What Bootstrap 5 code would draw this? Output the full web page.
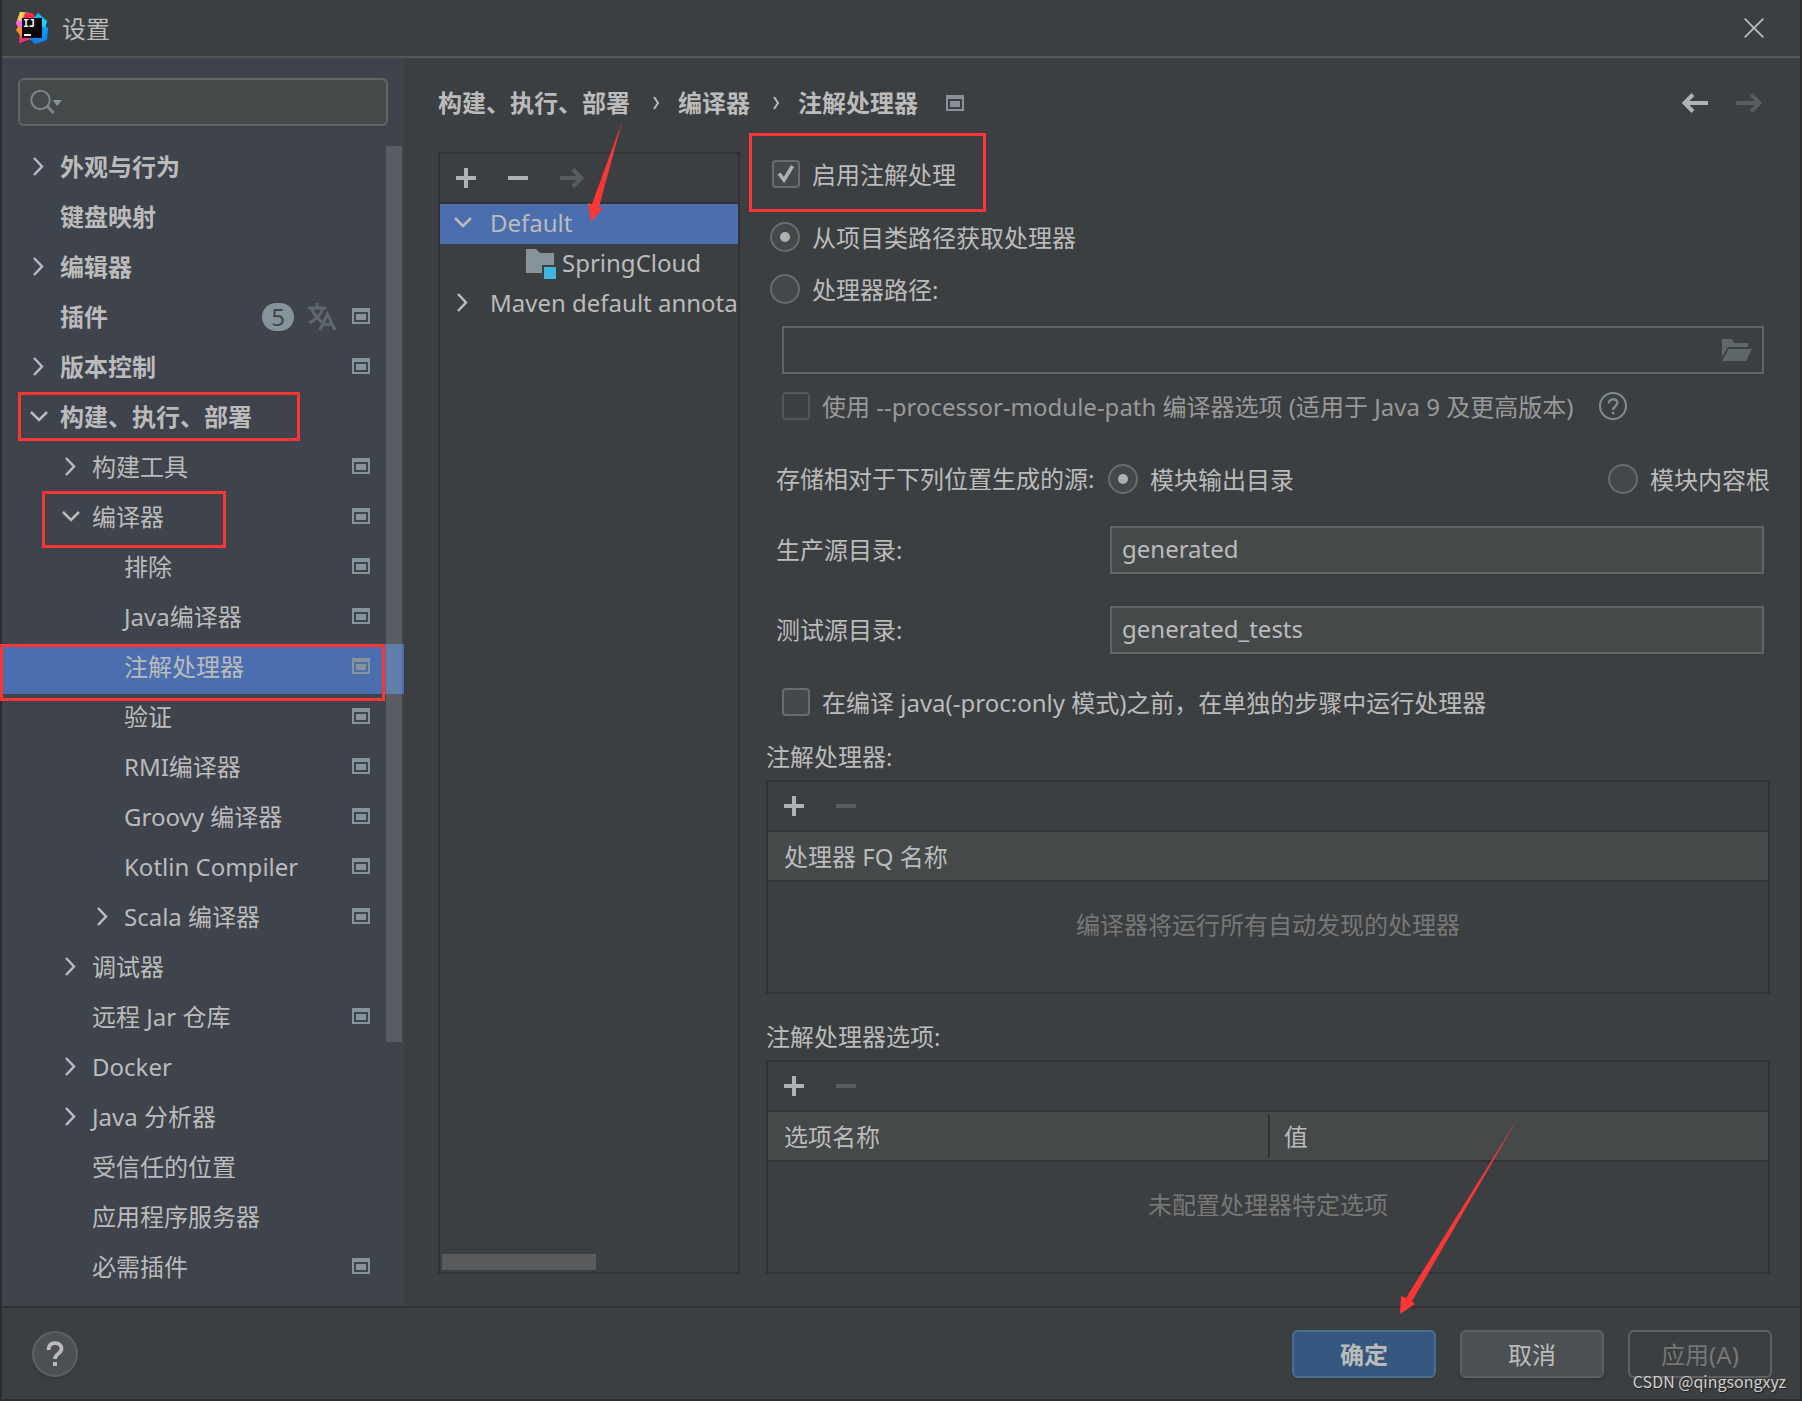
<!DOCTYPE html>
<html lang="zh-CN" data-bs-theme="dark">
<head>
<meta charset="utf-8">
<meta name="viewport" content="width=device-width, initial-scale=1">
<title>设置</title>
<link rel="stylesheet" href="https://cdn.jsdelivr.net/npm/bootstrap@5.3.0/dist/css/bootstrap.min.css">
<style>
:root{--ide-bg:#3c3f41;--ide-text:#bbbbbb;--ide-line:#323232;--ide-field:#45494a;--ide-edge:#646464;--ide-blue:#4b6eaf;--ide-icon:#87939a;--ide-dim:#5b5c5d;--ide-red:#fc3535}
body{background:var(--ide-bg);color:var(--ide-text);font-family:"Noto Sans","Noto Sans CJK SC",sans-serif;font-size:24px;line-height:32px}
svg{display:block;flex:none}
button.tool{background:none;border:0;padding:0;color:#afb1b3}
button.tool:disabled{color:var(--ide-dim)}
.window{min-height:100vh;border:solid #2b2d2f;border-width:0 2px 2px}
.titlebar{height:58px;border-bottom:2px solid #555555;padding:0 36px 0 14px}
.titlebar h1{font-size:24px;line-height:32px;font-weight:400;color:var(--ide-text);margin:0 0 0 14px;padding-top:2px}
.side{width:402px;background:#3f434c;padding-bottom:12px}
.search-wrap{padding:20px 16px 18px}
.search-box{height:48px;border:2px solid var(--ide-edge);border-radius:6px;background:var(--ide-field);padding-left:10px}
.search-box input{background:none;border:0;box-shadow:none;color:var(--ide-text);font-size:24px;padding:0 8px}
.tree a{height:50px;color:var(--ide-text);text-decoration:none;padding:0 34px 4px 0;position:relative}
.tree a.top-level{font-weight:700}
.tree .l0{padding-left:28px}
.tree .l1{padding-left:60px}
.tree .l2{padding-left:92px}
.tree .chev{width:30px}
.tree a.current{background:var(--ide-blue)}
.thumb{position:absolute;right:2px;top:2px;width:16px;height:896px;background:rgba(166,166,166,.26)}
.count{width:32px;height:28px;border-radius:14px;background:var(--ide-icon);color:#3f434c;line-height:28px;font-size:24px;font-weight:400}
.lang{margin:0 16px 0 14px}
.ring{position:absolute;border:3px solid var(--ide-red);pointer-events:none;z-index:3}
.ring-build{left:16px;top:-2px;width:282px;height:49px}
.ring-compiler{left:40px;top:-3px;width:184px;height:57px}
.ring-current{left:-2px;top:0;width:385px;height:57px}
.ring-enable{left:-17px;top:-19px;width:237px;height:79px}
.pointer{position:absolute;pointer-events:none;z-index:4}
.pointer-profile{left:148px;top:-34px}
.pointer-ok{right:282px;top:-190px}
.main{padding:0 30px 32px 34px}
.crumbs{height:94px;padding:0 8px 4px 0;font-weight:700}
.crumbs ol{gap:18px}
.crumbs .here{padding:2px 0 0 10px}
.profiles{width:302px;border:2px solid var(--ide-line)}
.bar{height:50px;border-bottom:2px solid var(--ide-line);padding:0 16px;gap:32px}
.profiles a{height:40px;color:var(--ide-text);text-decoration:none;padding-left:14px;padding-bottom:2px;white-space:nowrap}
.profiles a.current{background:var(--ide-blue)}
.profiles .chev{width:36px}
.profiles .child{padding-left:86px;gap:6px}
.hthumb{width:154px;height:16px;background:#595a5b;margin:0 0 2px 2px}
.opts{margin-left:26px;min-width:0}
.opt{gap:12px}
.opt .form-check-input{width:28px;height:28px;margin:0;flex:none;background-color:#43494a;border:2px solid #6b6b6b;border-radius:4px;box-shadow:none;float:none}
.opt .form-check-input[type=radio]{width:30px;height:30px;border-radius:50%}
.opt .form-check-input:checked{background-color:#43494a;border-color:#6b6b6b}
.opt .form-check-input:disabled{background-color:transparent;border-color:#545556;opacity:1}
.opt .form-check-input[type=checkbox]:checked{background-size:24px 24px;background-image:url("data:image/svg+xml,%3csvg xmlns='http://www.w3.org/2000/svg' viewBox='0 0 24 24'%3e%3cpath d='M5 11.500l5 6.500L18.500 4' fill='none' stroke='%23b0b0b0' stroke-width='3.600'/%3e%3c/svg%3e")}
.opt .form-check-input[type=radio]:checked{background-size:26px 26px;background-image:url("data:image/svg+xml,%3csvg xmlns='http://www.w3.org/2000/svg' viewBox='0 0 26 26'%3e%3ccircle cx='13' cy='13' r='5' fill='%23b0b0b0'/%3e%3c/svg%3e")}
.opt label{padding-top:1px}
.opt.faded,.opt.faded label{color:#999999}
.hint{margin-left:14px}
.row-enable{height:44px;padding-left:6px;position:relative;margin-bottom:15px}
.row-radio{height:52px;padding-left:4px}
.path-box{height:48px;border:2px solid var(--ide-edge);margin:11px 6px 0 16px;padding-right:10px}
.path-box input{background:none!important;border:0;box-shadow:none}
.row-module{height:64px;padding-left:16px}
.row-store{height:50px;margin-top:16px}
.cap{width:344px;padding-left:10px}
.row-store .cap{width:342px}
.row-dir{height:48px;margin-top:22px;padding-right:6px}
.row-dir+.row-dir{margin-top:32px}
.row-dir .form-control{height:48px;border:2px solid var(--ide-edge);border-radius:0;background:var(--ide-field);color:var(--ide-text);font-size:24px;line-height:32px;padding:4px 10px 8px}
.row-proc{height:60px;margin-top:18px;padding-left:16px}
.group-title{font-size:24px;font-weight:400;color:var(--ide-text);line-height:32px;padding:9px 0 7px;margin:0}
.grid-box+.group-title{margin-top:18px}
.grid-box{border:2px solid var(--ide-line)}
.grid-box table{width:100%;table-layout:fixed;border-collapse:separate;border-spacing:0}
.grid-box th{height:50px;background-color:#45494a;border-bottom:2px solid var(--ide-line);font-weight:400;padding:2px 16px 0}
.grid-box th.split{background-image:linear-gradient(var(--ide-line),var(--ide-line));background-size:2px 44px;background-position:left center;background-repeat:no-repeat}
.grid-box td{height:110px;text-align:center;color:#777777;padding:0 0 24px}
.foot{border-top:2px solid var(--ide-line);padding:22px 28px 21px 30px;position:relative}
.foot .btn{width:144px;height:48px;border:2px solid #5e6060;border-radius:6px;background:#4c5052;color:var(--ide-text);font-size:24px;line-height:32px;padding:7px 0 5px;box-shadow:0 3px 2px rgba(0,0,0,.1)}
.foot .btn.ok{background:#365880;border-color:#4c708c;font-weight:700}
.foot .btn:disabled{background:transparent;color:#777777;opacity:1;box-shadow:none}
.foot .btn.help{width:46px;height:46px;border-radius:50%;padding:0}
.credit{position:absolute;right:14px;bottom:6px;font-family:"Noto Sans CJK SC",sans-serif;font-size:16px;line-height:24px;color:#cfcfcf;text-shadow:1px 1px 1px #222222}
</style>
<script src="https://cdn.jsdelivr.net/npm/bootstrap@5.3.0/dist/js/bootstrap.bundle.min.js"></script>
</head>
<body>
<svg width="0" height="0" class="position-absolute" aria-hidden="true">
  <symbol id="right" viewBox="0 0 18 22"><path d="M4 2l8 8.500-8 8.500" fill="none" stroke="currentColor" stroke-width="2.500"/></symbol>
  <symbol id="down" viewBox="0 0 18 22"><path d="M1 6l8 8 8-8" fill="none" stroke="currentColor" stroke-width="2.500"/></symbol>
  <symbol id="proj" viewBox="0 0 18 18"><path d="M0 0h18v16H0zM2 4v10h14V4z" fill="#87939a" fill-rule="evenodd"/><path d="M4 6h10v6H4z" fill="#87939a"/></symbol>
  <symbol id="plus" viewBox="0 0 20 20"><path d="M8 0h4v8h8v4h-8v8H8v-8H0V8h8z" fill="currentColor"/></symbol>
  <symbol id="minus" viewBox="0 0 20 20"><path d="M0 8h20v4H0z" fill="currentColor"/></symbol>
  <symbol id="fwd" viewBox="0 0 26 20"><path d="M0 10h22M15 1.500l8.500 8.500-8.500 8.500" fill="none" stroke="currentColor" stroke-width="4"/></symbol>
  <symbol id="back" viewBox="0 0 26 20"><path d="M26 10H4M11 1.500L2.500 10l8.500 8.500" fill="none" stroke="currentColor" stroke-width="4"/></symbol>
</svg>

<div class="window d-flex flex-column">
  <header class="titlebar d-flex align-items-center">
    <svg width="32" height="32" viewBox="0 0 32 32" aria-hidden="true">
      <defs>
        <linearGradient id="warm" x1="0" y1="0" x2="0" y2="1"><stop offset="0" stop-color="#fcdc5c"/><stop offset=".3" stop-color="#fb7ba8"/><stop offset=".55" stop-color="#fd9a2b"/><stop offset="1" stop-color="#fe2e8c"/></linearGradient>
        <linearGradient id="cool" x1="0" y1="0" x2="0" y2="1"><stop offset="0" stop-color="#07c3f2"/><stop offset="1" stop-color="#087cfa"/></linearGradient>
      </defs>
      <path d="M4 0l11 1 5 5-3 20-14 5 1-9-4-4 2-3-2-4z" fill="url(#warm)"/>
      <path d="M4 0l6 1-4 8-4-1z" fill="#fcd25c"/>
      <path d="M9 1l7 0 4 5H7z" fill="#fe2857"/>
      <path d="M0 12l6-4v7l-4-1z" fill="#ff5ef0"/>
      <path d="M0 18l6-3v8H4z" fill="#fd8f1c"/>
      <path d="M3 31l3-9 11 4z" fill="#fe2d6f"/>
      <path d="M22 1l9 8-2 5 3 2-1 12-12 4-6-6h12V6h-7z" fill="url(#cool)"/>
      <path d="M26 6l5 3-2 7-3-2z" fill="#1ad0ff"/>
      <path d="M6 6h20v20H6z" fill="#0b0508"/>
      <text x="7" y="15" font-family="DejaVu Sans Mono" font-size="10" font-weight="700" fill="#fff">IJ</text>
      <path d="M8 22h7v2H8z" fill="#fff"/>
    </svg>
    <h1 class="flex-grow-1">设置</h1>
    <button class="tool" type="button" aria-label="关闭"><svg width="20" height="20" viewBox="0 0 20 20"><path d="M.7.7l18.600 18.600M19.300.7L.7 19.300" stroke="#bbb" stroke-width="1.800"/></svg></button>
  </header>

  <div class="d-flex flex-grow-1">
    <aside class="side flex-shrink-0">
      <div class="search-wrap">
        <div class="search-box d-flex align-items-center">
          <svg width="34" height="26" viewBox="0 0 34 26" aria-hidden="true"><circle cx="10.500" cy="11" r="9.200" fill="none" stroke="#7a858c" stroke-width="2"/><path d="M17 17l6.500 7" stroke="#7a858c" stroke-width="3"/><path d="M22.500 11H32l-4.750 6z" fill="#87939a"/></svg>
          <input class="form-control" type="search" aria-label="搜索设置">
        </div>
      </div>
      <nav class="tree position-relative" aria-label="设置分类">
        <a href="#" class="top-level l0 d-flex align-items-center"><span class="chev"><svg width="18" height="22"><use href="#right"/></svg></span>外观与行为</a>
        <a href="#" class="top-level l0 d-flex align-items-center"><span class="chev"></span>键盘映射</a>
        <a href="#" class="top-level l0 d-flex align-items-center"><span class="chev"><svg width="18" height="22"><use href="#right"/></svg></span>编辑器</a>
        <a href="#" class="top-level l0 d-flex align-items-center"><span class="chev"></span><span class="flex-grow-1">插件</span><span class="count text-center">5</span>
          <svg class="lang" width="28" height="28" viewBox="0 0 28 28" fill="none" stroke="#5f666e" stroke-width="3" aria-hidden="true"><path d="M0 5h18M9 0v5M15 5C13 11 8 17 1 20M4 6c2 6 6 10 10 13"/><path d="M12 27l7.500-16L27 27M14.500 21.500h10"/></svg>
          <svg width="18" height="18"><use href="#proj"/></svg></a>
        <a href="#" class="top-level l0 d-flex align-items-center"><span class="chev"><svg width="18" height="22"><use href="#right"/></svg></span><span class="flex-grow-1">版本控制</span><svg width="18" height="18"><use href="#proj"/></svg></a>
        <a href="#" class="top-level l0 d-flex align-items-center"><span class="chev"><svg width="18" height="22"><use href="#down"/></svg></span>构建、执行、部署<span class="ring ring-build"></span></a>
        <a href="#" class="l1 d-flex align-items-center"><span class="chev"><svg width="18" height="22"><use href="#right"/></svg></span><span class="flex-grow-1">构建工具</span><svg width="18" height="18"><use href="#proj"/></svg></a>
        <a href="#" class="l1 d-flex align-items-center"><span class="chev"><svg width="18" height="22"><use href="#down"/></svg></span><span class="flex-grow-1">编译器</span><svg width="18" height="18"><use href="#proj"/></svg><span class="ring ring-compiler"></span></a>
        <a href="#" class="l2 d-flex align-items-center"><span class="chev"></span><span class="flex-grow-1">排除</span><svg width="18" height="18"><use href="#proj"/></svg></a>
        <a href="#" class="l2 d-flex align-items-center"><span class="chev"></span><span class="flex-grow-1">Java编译器</span><svg width="18" height="18"><use href="#proj"/></svg></a>
        <a href="#" class="l2 current d-flex align-items-center" aria-current="page"><span class="chev"></span><span class="flex-grow-1">注解处理器</span><svg width="18" height="18"><use href="#proj"/></svg><span class="ring ring-current"></span></a>
        <a href="#" class="l2 d-flex align-items-center"><span class="chev"></span><span class="flex-grow-1">验证</span><svg width="18" height="18"><use href="#proj"/></svg></a>
        <a href="#" class="l2 d-flex align-items-center"><span class="chev"></span><span class="flex-grow-1">RMI编译器</span><svg width="18" height="18"><use href="#proj"/></svg></a>
        <a href="#" class="l2 d-flex align-items-center"><span class="chev"></span><span class="flex-grow-1">Groovy 编译器</span><svg width="18" height="18"><use href="#proj"/></svg></a>
        <a href="#" class="l2 d-flex align-items-center"><span class="chev"></span><span class="flex-grow-1">Kotlin Compiler</span><svg width="18" height="18"><use href="#proj"/></svg></a>
        <a href="#" class="l2 d-flex align-items-center"><span class="chev"><svg width="18" height="22"><use href="#right"/></svg></span><span class="flex-grow-1">Scala 编译器</span><svg width="18" height="18"><use href="#proj"/></svg></a>
        <a href="#" class="l1 d-flex align-items-center"><span class="chev"><svg width="18" height="22"><use href="#right"/></svg></span>调试器</a>
        <a href="#" class="l1 d-flex align-items-center"><span class="chev"></span><span class="flex-grow-1">远程 Jar 仓库</span><svg width="18" height="18"><use href="#proj"/></svg></a>
        <a href="#" class="l1 d-flex align-items-center"><span class="chev"><svg width="18" height="22"><use href="#right"/></svg></span>Docker</a>
        <a href="#" class="l1 d-flex align-items-center"><span class="chev"><svg width="18" height="22"><use href="#right"/></svg></span>Java 分析器</a>
        <a href="#" class="l1 d-flex align-items-center"><span class="chev"></span>受信任的位置</a>
        <a href="#" class="l1 d-flex align-items-center"><span class="chev"></span>应用程序服务器</a>
        <a href="#" class="l1 d-flex align-items-center"><span class="chev"></span><span class="flex-grow-1">必需插件</span><svg width="18" height="18"><use href="#proj"/></svg></a>
        <div class="thumb"></div>
      </nav>
    </aside>

    <main class="main flex-grow-1 d-flex flex-column">
      <div class="crumbs d-flex align-items-center">
        <ol class="list-unstyled d-flex align-items-center mb-0 flex-grow-1">
          <li>构建、执行、部署</li>
          <li aria-hidden="true"><svg width="12" height="16" viewBox="0 0 12 16"><path d="M6 2l4 6-4 6" fill="none" stroke="#bbb" stroke-width="2"/></svg></li>
          <li>编译器</li>
          <li aria-hidden="true"><svg width="12" height="16" viewBox="0 0 12 16"><path d="M6 2l4 6-4 6" fill="none" stroke="#bbb" stroke-width="2"/></svg></li>
          <li>注解处理器</li>
          <li class="here"><svg width="18" height="18"><use href="#proj"/></svg></li>
        </ol>
        <button class="tool me-4" type="button" aria-label="后退"><svg width="26" height="20"><use href="#back"/></svg></button>
        <button class="tool ms-1" type="button" aria-label="前进" disabled><svg width="26" height="20"><use href="#fwd"/></svg></button>
      </div>

      <div class="d-flex flex-grow-1">
        <section class="profiles d-flex flex-column flex-shrink-0 position-relative" aria-label="配置文件">
          <div class="bar d-flex align-items-center">
            <button class="tool" type="button" aria-label="添加"><svg width="20" height="20"><use href="#plus"/></svg></button>
            <button class="tool" type="button" aria-label="移除"><svg width="20" height="20"><use href="#minus"/></svg></button>
            <button class="tool" type="button" aria-label="移动到" disabled><svg width="24" height="20" viewBox="2 0 24 20"><use href="#fwd" width="26" height="20"/></svg></button>
          </div>
          <div class="flex-grow-1 overflow-hidden">
            <a href="#" class="current d-flex align-items-center"><span class="chev"><svg width="18" height="22"><use href="#down"/></svg></span>Default</a>
            <a href="#" class="child d-flex align-items-center">
              <svg width="30" height="32" viewBox="0 -2 30 32" aria-hidden="true"><path d="M0 0h10l4 4h14v12H16v8H0z" fill="#87939a"/><path d="M18 18h12v12H18z" fill="#40b6e0"/></svg>SpringCloud</a>
            <a href="#" class="d-flex align-items-center"><span class="chev flex-shrink-0"><svg width="18" height="22"><use href="#right"/></svg></span>Maven default annota</a>
          </div>
          <div class="hthumb"></div>
          <svg class="pointer pointer-profile" width="36" height="102" viewBox="0 0 36 102" aria-hidden="true"><path d="M34 2L11 87l4 1-12 14-3-19 4 1z" fill="#fc3535"/></svg>
        </section>

        <form class="opts flex-grow-1 d-flex flex-column">
          <div class="opt row-enable d-flex align-items-center"><input class="form-check-input" type="checkbox" id="enable" checked><label for="enable">启用注解处理</label><span class="ring ring-enable"></span></div>
          <div class="opt row-radio d-flex align-items-center"><input class="form-check-input" type="radio" name="src" id="cp" checked><label for="cp">从项目类路径获取处理器</label></div>
          <div class="opt row-radio d-flex align-items-center"><input class="form-check-input" type="radio" name="src" id="pp"><label for="pp">处理器路径:</label></div>
          <div class="path-box d-flex align-items-center">
            <input class="form-control flex-grow-1" type="text" aria-label="处理器路径" disabled>
            <button class="tool" type="button" aria-label="浏览" disabled><svg width="30" height="22" viewBox="0 0 30 22"><path d="M0 0h10l2 4h14v4H6L0 18z" fill="#5f676b"/><path d="M6.500 10H30l-6 12H0z" fill="#5f676b"/></svg></button>
          </div>
          <div class="opt faded row-module d-flex align-items-center"><input class="form-check-input" type="checkbox" id="mp" disabled><label for="mp">使用 --processor-module-path 编译器选项 (适用于 Java 9 及更高版本)</label>
            <svg class="hint" width="28" height="28" viewBox="0 0 28 28" aria-hidden="true"><circle cx="14" cy="14" r="13" fill="none" stroke="#7f8b91" stroke-width="2"/><path d="M9.800 11.500c0-2.600 1.700-4.300 4.300-4.300s4.200 1.500 4.200 3.700c0 3.200-4.200 3.500-4.200 7" fill="none" stroke="#7f8b91" stroke-width="2.400"/><path d="M12.800 19.800h2.600v2.400h-2.600z" fill="#7f8b91"/></svg></div>

          <div class="row-store d-flex align-items-center">
            <div class="cap">存储相对于下列位置生成的源:</div>
            <div class="opt d-flex align-items-center"><input class="form-check-input" type="radio" name="store" id="so" checked><label for="so">模块输出目录</label></div>
            <div class="opt d-flex align-items-center ms-auto"><input class="form-check-input" type="radio" name="store" id="sc"><label for="sc">模块内容根</label></div>
          </div>
          <div class="row-dir d-flex align-items-center"><label class="cap flex-shrink-0" for="prod">生产源目录:</label><input class="form-control" id="prod" type="text" value="generated"></div>
          <div class="row-dir d-flex align-items-center"><label class="cap flex-shrink-0" for="test">测试源目录:</label><input class="form-control" id="test" type="text" value="generated_tests"></div>
          <div class="opt row-proc d-flex align-items-center"><input class="form-check-input" type="checkbox" id="po"><label for="po">在编译 java(-proc:only 模式)之前，在单独的步骤中运行处理器</label></div>

          <h2 class="group-title">注解处理器:</h2>
          <div class="grid-box">
            <div class="bar d-flex align-items-center">
              <button class="tool" type="button" aria-label="添加处理器"><svg width="20" height="20"><use href="#plus"/></svg></button>
              <button class="tool" type="button" aria-label="移除处理器" disabled><svg width="20" height="20"><use href="#minus"/></svg></button>
            </div>
            <table><thead><tr><th>处理器 FQ 名称</th></tr></thead><tbody><tr><td>编译器将运行所有自动发现的处理器</td></tr></tbody></table>
          </div>
          <h2 class="group-title">注解处理器选项:</h2>
          <div class="grid-box flex-grow-1">
            <div class="bar d-flex align-items-center">
              <button class="tool" type="button" aria-label="添加选项"><svg width="20" height="20"><use href="#plus"/></svg></button>
              <button class="tool" type="button" aria-label="移除选项" disabled><svg width="20" height="20"><use href="#minus"/></svg></button>
            </div>
            <table><thead><tr><th>选项名称</th><th class="split">值</th></tr></thead><tbody><tr><td colspan="2">未配置处理器特定选项</td></tr></tbody></table>
          </div>
        </form>
      </div>
    </main>
  </div>

  <footer class="foot d-flex align-items-center gap-4">
    <button class="btn help me-auto d-flex align-items-center justify-content-center" type="button" aria-label="帮助"><svg width="18" height="26" viewBox="0 0 18 26"><path d="M2.500 9C2.500 4.500 5 2.200 9 2.200s6.500 2.300 6.500 5.600c0 4.700-6.500 5-6.500 10.200" fill="none" stroke="#bbb" stroke-width="3.800"/><path d="M7 21h4v4H7z" fill="#bbb"/></svg></button>
    <button class="btn ok" type="button">确定</button>
    <button class="btn" type="button">取消</button>
    <button class="btn" type="button" disabled>应用(A)</button>
    <svg class="pointer pointer-ok" width="118" height="196" viewBox="0 0 118 196" aria-hidden="true"><path d="M118 0L12 183l3 3-15 10 1-18 5 2z" fill="#fc3535"/></svg>
    <div class="credit">CSDN @qingsongxyz</div>
  </footer>
</div>
</body>
</html>
